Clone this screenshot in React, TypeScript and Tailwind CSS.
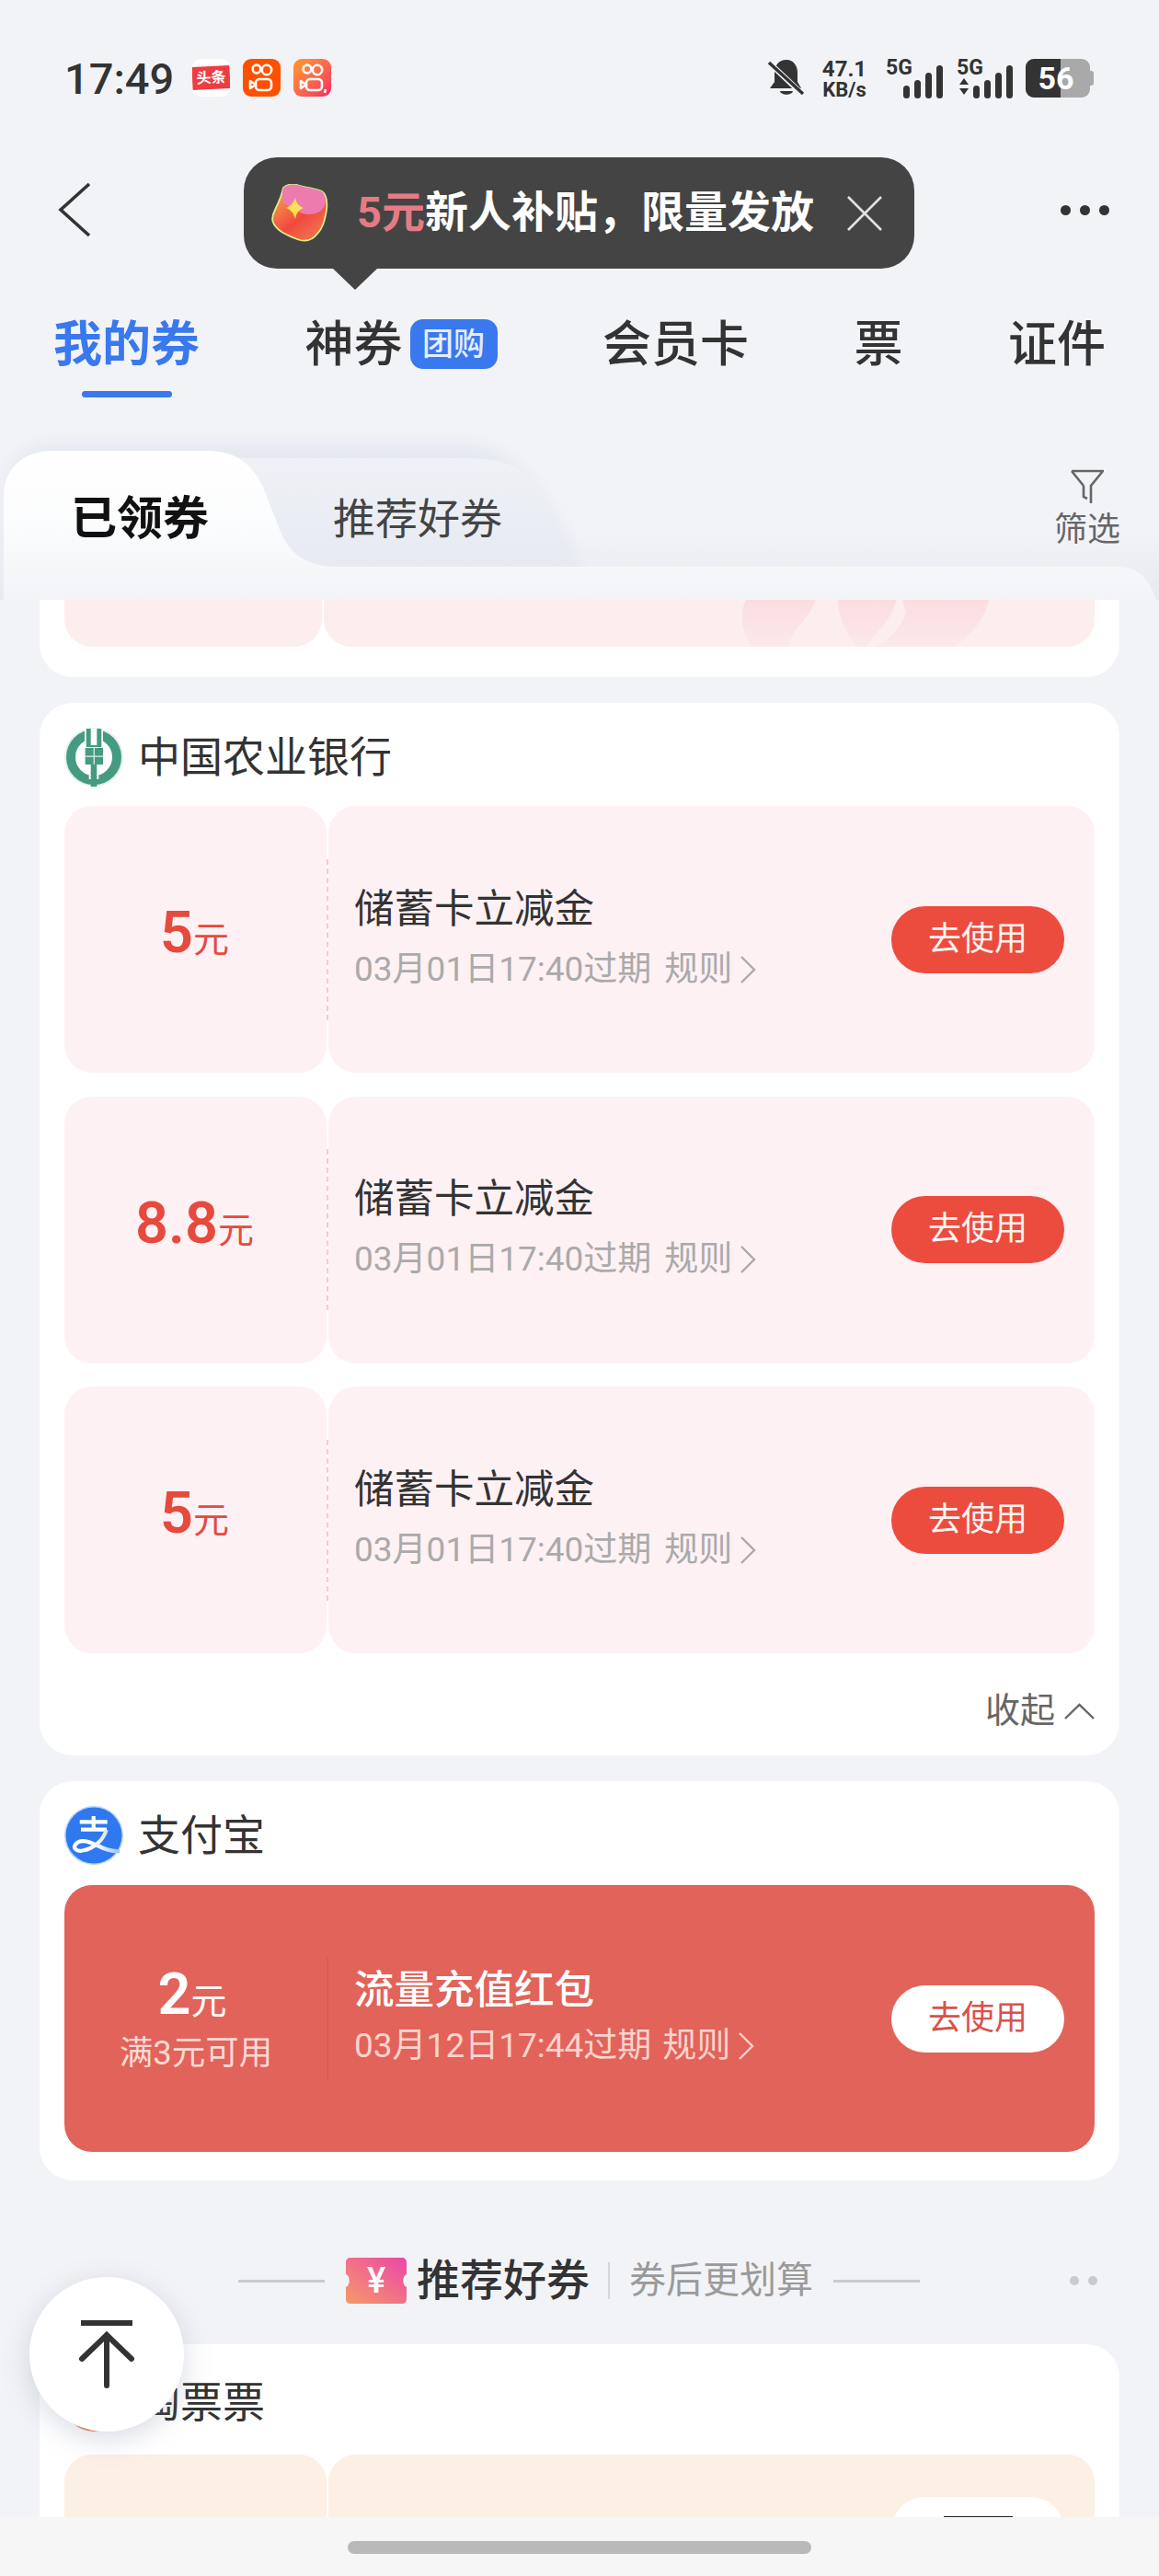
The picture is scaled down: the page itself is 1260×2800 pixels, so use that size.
import React from 'react'

type Coupon = { amount: string }

const bankCoupons: Coupon[] = [{ amount: '5' }, { amount: '8.8' }, { amount: '5' }]

function Signal({ arrows }: { arrows?: boolean }) {
  return (
    <svg width="64" height="44" viewBox="0 0 64 44" className="absolute left-0 top-0" fill="#333">
      {arrows && <path d="M2 22 L7 15 L12 22 Z M2 26 L12 26 L7 33 Z" />}
      <rect x="17" y="23" width="7" height="14" rx="3.5" />
      <rect x="29" y="17" width="7" height="20" rx="3.5" />
      <rect x="41" y="9" width="7" height="28" rx="3.5" />
      <rect x="53" y="1" width="7" height="36" rx="3.5" />
    </svg>
  )
}

function KuaishouGlyph({ comma }: { comma?: boolean }) {
  return (
    <svg width="34" height="34" viewBox="0 0 34 34" fill="none" stroke="#fff" strokeWidth="2.6">
      <circle cx="11" cy="7" r="4.4" />
      <circle cx="22" cy="8" r="5.2" />
      <rect x="10" y="18" width="17" height="12" rx="4" />
      <path d="M10 24 L4 20 V28 Z" strokeLinejoin="round" />
      {comma && <path d="M31 29 L30 33" strokeWidth="2.4" />}
    </svg>
  )
}

function StatusBar() {
  return (
    <div className="h-[172px] flex items-start pt-[64px] pl-[70px]">
      <div className="w-[139px] h-[44px] leading-[44px] text-[47px] font-medium text-[#333]">17:49</div>
      <div className="w-[41px] h-[41px] rounded-[9px] bg-white flex items-center justify-center overflow-hidden">
        <div className="w-[41px] h-[25px] bg-[#ee3d42] -rotate-3 text-white text-[16px] font-bold leading-[25px] text-center">头条</div>
      </div>
      <div className="ml-[14px] w-[41px] h-[41px] rounded-[9px] bg-[#ff5000] flex items-center justify-center">
        <KuaishouGlyph />
      </div>
      <div className="ml-[14px] w-[41px] h-[41px] rounded-[9px] bg-gradient-to-br from-[#ff9a1f] to-[#f5205f] flex items-center justify-center">
        <KuaishouGlyph comma />
      </div>

      {/* right side indicators */}
      <svg width="40" height="42" viewBox="0 0 40 42" className="ml-[475px] shrink-0" fill="#333">
        <path d="M20 1 C11 1 7 8 7 15 V25 L2 32 H36 L32 25 V15 C32 8 28 1 20 1 Z" />
        <path d="M13 35 H27 C26 40 14 40 13 35 Z" />
        <path d="M2 5 L37 38" stroke="#f2f3f7" strokeWidth="6" />
        <path d="M1 4 L38 38" stroke="#333" strokeWidth="3.4" />
      </svg>
      <div className="ml-[17px] w-[52px] flex flex-col items-center text-[#333] font-bold">
        <span className="text-[24px] leading-[22px]">47.1</span>
        <span className="text-[22px] leading-[20px] mt-[2px]">KB/s</span>
      </div>
      <div className="relative ml-[20px] w-[64px] h-[44px]">
        <span className="absolute -left-[1px] -top-[1px] text-[23px] leading-[22px] font-bold text-[#333]">5G</span>
        <div className="absolute left-[1px] top-[6px]"><Signal /></div>
      </div>
      <div className="relative ml-[13px] w-[64px] h-[44px]">
        <span className="absolute -left-[1px] -top-[1px] text-[23px] leading-[22px] font-bold text-[#333]">5G</span>
        <div className="absolute left-0 top-[6px]"><Signal arrows /></div>
      </div>
      <div className="ml-[10px] relative w-[70px] h-[42px] rounded-[9px] bg-[#a9a9a9] overflow-hidden">
        <div className="w-[38px] h-full bg-[#333]" />
        <span className="absolute inset-0 text-center text-white text-[34px] font-bold leading-[42px] pr-[4px]">56</span>
      </div>
      <div className="w-[4px] h-[16px] mt-[13px] rounded-r-[3px] bg-[#a9a9a9]" />
    </div>
  )
}

function NavBar() {
  return (
    <div className="h-[112px] flex items-center justify-between pl-[62px] pr-[54px]">
      <svg width="38" height="60" viewBox="0 0 38 60" fill="none" stroke="#333" strokeWidth="3.6">
        <path d="M35 2 L4 30 L35 58" />
      </svg>
      <div className="flex gap-[10px]">
        <span className="w-[11px] h-[11px] rounded-full bg-[#333]" />
        <span className="w-[11px] h-[11px] rounded-full bg-[#333]" />
        <span className="w-[11px] h-[11px] rounded-full bg-[#333]" />
      </div>
    </div>
  )
}

function TopTabs() {
  return (
    <div className="h-[186px] flex justify-between items-start pt-[64px] pl-[58px] pr-[58px] text-[53px] leading-[54px] text-[#333] font-medium">
      <div className="flex flex-col items-center">
        <span className="text-[#3a78ee] font-bold">我的券</span>
        <div className="w-[98px] h-[7px] mt-[23px] rounded-full bg-[#3a78ee]" />
      </div>
      <div className="flex items-center -mt-[2px]">
        <span className="pt-[2px]">神券</span>
        <span className="ml-[8px] w-[95px] h-[54px] rounded-[14px] bg-[#3a78ee] text-[#e3edff] text-[34px] leading-[54px] text-center font-medium">团购</span>
      </div>
      <span>会员卡</span>
      <span>票</span>
      <span>证件</span>
    </div>
  )
}

function SubTabs() {
  return (
    <div className="relative h-[182px] bg-gradient-to-b from-[#f2f3f7] from-60% to-[#e8eaef]">
      <svg width="1260" height="182" viewBox="0 0 1260 182" className="absolute left-0 top-0">
        <defs>
          <linearGradient id="backTab" x1="0" y1="0" x2="0" y2="1">
            <stop offset="0" stopColor="#eff1f6" />
            <stop offset="1" stopColor="#e5e8f1" />
          </linearGradient>
          <linearGradient id="activeTab" x1="0" y1="0" x2="0" y2="1">
            <stop offset="0" stopColor="#ffffff" />
            <stop offset="0.5" stopColor="#fbfcfd" />
            <stop offset="0.78" stopColor="#f5f7f9" />
            <stop offset="1" stopColor="#f2f4f8" />
          </linearGradient>
          <filter id="tabShade" x="-10%" y="-30%" width="120%" height="160%">
            <feGaussianBlur stdDeviation="10" />
          </filter>
        </defs>
        <path d="M4 100 C4 30 26 12 58 12 H510 C560 20 590 60 630 146 H4 Z" fill="#dfe3ee" opacity="0.7" filter="url(#tabShade)" />
        <path d="M230 182 V28 H510 C555 28 578 44 592 72 L612 118 C618 134 622 142 640 150 V182 Z" fill="url(#backTab)" />
        <path d="M0 182 H4 V70 C4 38 26 20 58 20 H225 C258 20 276 36 287 62 L305 108 C316 134 336 146 366 146 H1215 C1238 146 1250 160 1257 182 Z" fill="url(#activeTab)" />
      </svg>
      <div className="relative flex items-start pt-[40px] pl-[77px] pr-[41px]">
        <span className="mt-[26px] w-[150px] text-[50px] leading-[56px] font-bold text-[#111]">已领券</span>
        <span className="mt-[26px] ml-[135px] text-[46px] leading-[56px] text-[#444]">推荐好券</span>
        <div className="ml-auto w-[74px] flex flex-col items-center">
          <svg width="36" height="38" viewBox="0 0 36 38" fill="none" stroke="#666" strokeWidth="2.6">
            <path d="M1 2 H35 L22 18 V37 M14 18 L1 2 M14 18 V30 L18 32" />
          </svg>
          <span className="mt-[8px] text-[36px] leading-[40px] text-[#666]">筛选</span>
        </div>
      </div>
    </div>
  )
}

function BankLogo() {
  return (
    <svg width="64" height="64" viewBox="0 0 64 64">
      <circle cx="32" cy="32" r="32" fill="#e4f1ed" />
      <circle cx="32" cy="32" r="25" fill="#fff" stroke="#459b82" strokeWidth="10" />
      <rect x="22" y="1" width="20" height="21" fill="#fff" />
      <rect x="23.7" y="1" width="5" height="20" fill="#459b82" />
      <rect x="35.3" y="1" width="5" height="20" fill="#459b82" />
      <rect x="26" y="19" width="12" height="2" fill="#459b82" />
      <rect x="22.6" y="22" width="19.4" height="18" fill="#459b82" />
      <rect x="22.6" y="30.5" width="19.4" height="1.4" fill="#cfe6de" />
      <rect x="31.6" y="22" width="1.4" height="18" fill="#cfe6de" />
      <rect x="26.7" y="40" width="10.6" height="16" fill="#fff" />
      <rect x="28.7" y="40" width="6.6" height="24" fill="#459b82" />
    </svg>
  )
}

function AlipayLogo() {
  return (
    <svg width="64" height="64" viewBox="0 0 64 64" fill="none">
      <defs>
        <linearGradient id="swoosh" gradientUnits="userSpaceOnUse" x1="34" y1="0" x2="60" y2="0">
          <stop offset="0" stopColor="#ffffff" />
          <stop offset="1" stopColor="#9cc0f6" />
        </linearGradient>
      </defs>
      <circle cx="32" cy="32" r="32" fill="#bcd4fb" />
      <circle cx="32" cy="32" r="30.5" fill="#2f78f0" />
      <path d="M31.7 11 V26 M16.7 17.3 H46.7 M18 25.7 H46" stroke="#fff" strokeWidth="4.2" />
      <path d="M45.7 26 C42 38 32 46 20 48.5 C12 50 9.5 45 12 42 C16 36 26 38 36 43 C44 47 52 50 60 49" stroke="url(#swoosh)" strokeWidth="4.2" />
    </svg>
  )
}

function GiftIcon() {
  return (
    <svg width="62" height="64" viewBox="0 0 62 64" className="shrink-0">
      <defs>
        <linearGradient id="gift" x1="0.1" y1="0.1" x2="0.7" y2="0.9">
          <stop offset="0" stopColor="#f8a34f" />
          <stop offset="0.65" stopColor="#f0493f" />
          <stop offset="1" stopColor="#f26a4a" />
        </linearGradient>
      </defs>
      <path d="M13 4 C18 0 24 0 28 1 C38 4 48 5 55 8 C60 12 61 20 60 28 C58 40 56 48 50 54 C44 62 36 63 28 60 C18 56 8 52 3 44 C0 40 1 34 4 28 C7 22 11 14 13 4 Z" fill="url(#gift)" stroke="#dcef86" strokeWidth="1.8" />
      <path d="M13 4 C18 0 24 0 28 1 C38 4 48 5 55 8 C60 14 60 22 56 27 C50 33 42 34 34 32 C26 28 18 24 13 20 C11 14 12 8 13 4 Z" fill="#ec7cb0" />
      <path d="M26 15 C27 21 30 24 35 26 C30 28 27 31 26 38 C24 31 21 28 16 26 C21 24 24 21 26 15 Z" fill="#fbe14f" />
    </svg>
  )
}

function TicketLogo() {
  return (
    <svg width="66" height="50" viewBox="0 0 66 50">
      <defs>
        <linearGradient id="ticket" x1="0" y1="1" x2="1" y2="0">
          <stop offset="0" stopColor="#f59a68" />
          <stop offset="1" stopColor="#ec46a8" />
        </linearGradient>
      </defs>
      <path d="M5 0 H61 C64 0 66 2 66 5 V18 C61 20 61 30 66 32 V45 C66 48 64 50 61 50 H5 C2 50 0 48 0 45 V32 C5 30 5 20 0 18 V5 C0 2 2 0 5 0 Z" fill="url(#ticket)" />
      <text x="33" y="38" textAnchor="middle" fontSize="38" fontWeight="500" fill="#fff">¥</text>
    </svg>
  )
}

function ChevronRight({ color }: { color: string }) {
  return (
    <svg width="18" height="34" viewBox="0 0 18 34" fill="none" stroke={color} strokeWidth="2.4" className="ml-[8px]">
      <path d="M2 3 L16 17 L2 31" />
    </svg>
  )
}

function UseButton() {
  return (
    <div className="w-[188px] h-[73px] rounded-full bg-[#ec4c3e] text-[#fff3f1] text-[36px] leading-[73px] text-center">去使用</div>
  )
}

function BankCoupon({ amount }: Coupon) {
  return (
    <div className="flex h-[290px]">
      <div className="w-[285px] rounded-[30px] bg-[#fdf1f4] flex items-baseline justify-center pt-[100px] pr-[2px] text-[#e64a3c]">
        <span className="text-[63px] leading-[76px] font-semibold">{amount}</span>
        <span className="text-[39px]">元</span>
      </div>
      <div className="w-[2px] h-[175px] self-center border-l-2 border-dashed border-[#f7c9d0]" />
      <div className="flex-1 rounded-[30px] bg-[#fdf1f4] flex items-center pl-[28px] pr-[33px]">
        <div>
          <div className="text-[43.5px] leading-[60px] text-[#333]">储蓄卡立减金</div>
          <div className="mt-[5px] flex items-center text-[37px] leading-[60px] text-[#aaaaaa]">
            <span>03月01日17:40过期</span>
            <span className="ml-[14px]">规则</span>
            <ChevronRight color="#aaaaaa" />
          </div>
        </div>
        <div className="ml-auto"><UseButton /></div>
      </div>
    </div>
  )
}

function AlipayCoupon() {
  return (
    <div className="flex items-center h-[290px] rounded-[30px] bg-[#e2635a]">
      <div className="w-[286px] flex flex-col items-center text-white">
        <div className="flex items-baseline h-[68px] pr-[8px]">
          <span className="text-[63px] leading-[68px] font-semibold">2</span>
          <span className="text-[39px]">元</span>
        </div>
        <div className="mt-[8px] text-[36.5px] leading-[44px] text-[#fbd9d4]">满3元可用</div>
      </div>
      <div className="w-[1px] h-[134px] bg-[#d4564d]" />
      <div className="flex-1 flex items-center pl-[28px] pr-[33px]">
        <div>
          <div className="text-[43.5px] leading-[60px] font-medium text-white">流量充值红包</div>
          <div className="flex items-center text-[37px] leading-[60px] text-[#fbd3cd]">
            <span>03月12日17:44过期</span>
            <span className="ml-[12px]">规则</span>
            <ChevronRight color="#fbd3cd" />
          </div>
        </div>
        <div className="ml-auto w-[188px] h-[73px] rounded-full bg-white text-[#d9534a] text-[36px] leading-[73px] text-center">去使用</div>
      </div>
    </div>
  )
}

function CouponList() {
  return (
    <div className="flex-1 overflow-hidden px-[43px] bg-[#f2f3f7]">
      {/* first card, scrolled under the header */}
      <div className="h-[84px] rounded-b-[36px] bg-white px-[27px]">
        <div className="flex h-[51px] gap-[2px]">
          <div className="w-[280px] rounded-b-[30px] bg-[#fdeeee]" />
          <div className="relative flex-1 rounded-b-[30px] bg-[#fdeeee] overflow-hidden">
            <svg width="280" height="51" viewBox="0 0 280 51" className="absolute left-[451px] top-0">
              <defs>
                <linearGradient id="mark" x1="0" y1="0" x2="0" y2="1">
                  <stop offset="0" stopColor="#fbdde1" />
                  <stop offset="1" stopColor="#fce8ea" />
                </linearGradient>
              </defs>
              <path d="M8 0 H84 C78 14 72 22 64 30 C58 38 56 44 54 51 H14 C4 36 0 16 8 0 Z" fill="url(#mark)" />
              <path d="M108 0 H172 C168 12 162 24 152 34 L138 51 H128 C116 36 108 18 108 0 Z" fill="url(#mark)" />
              <path d="M178 0 H272 C268 20 252 40 234 51 H148 C164 44 176 30 182 14 Z" fill="url(#mark)" />
            </svg>
          </div>
        </div>
      </div>

      {/* bank card */}
      <div className="mt-[28px] rounded-[36px] bg-white px-[27px]">
        <div className="h-[112px] pt-[6px] flex items-center">
          <BankLogo />
          <span className="ml-[16px] text-[46px] leading-[64px] text-[#333]">中国农业银行</span>
        </div>
        <div className="flex flex-col gap-[25.5px]">
          {bankCoupons.map((c, i) => (
            <BankCoupon key={i} amount={c.amount} />
          ))}
        </div>
        <div className="h-[111px] pt-[14px] flex items-center justify-end text-[38px] text-[#666]">
          <span>收起</span>
          <svg width="33" height="20" viewBox="0 0 33 20" fill="none" stroke="#666" strokeWidth="2.4" className="ml-[10px]">
            <path d="M1 18 L16.5 3 L32 18" />
          </svg>
        </div>
      </div>

      {/* alipay */}
      <div className="mt-[28px] rounded-[36px] bg-white px-[27px] pb-[31px]">
        <div className="h-[113px] pt-[4px] flex items-center">
          <AlipayLogo />
          <span className="ml-[16px] text-[46px] leading-[64px] text-[#333]">支付宝</span>
        </div>
        <AlipayCoupon />
      </div>

      {/* recommended section title */}
      <div className="h-[178px] pt-[40px] pl-[216px] pr-[24px] flex items-center">
        <div className="w-[94px] h-[3px] bg-[#c9cad0]" />
        <div className="ml-[23px]"><TicketLogo /></div>
        <span className="ml-[11px] text-[47px] leading-[56px] text-[#333] font-medium">推荐好券</span>
        <div className="ml-[20px] w-[2px] h-[40px] bg-[#d5d6da]" />
        <span className="ml-[21px] text-[40px] leading-[56px] text-[#9a9a9a]">券后更划算</span>
        <div className="ml-[22px] w-[94px] h-[3px] bg-[#c9cad0]" />
        <div className="ml-auto flex gap-[10px]">
          <span className="w-[10px] h-[10px] rounded-full bg-[#c9cad0]" />
          <span className="w-[10px] h-[10px] rounded-full bg-[#c9cad0]" />
        </div>
      </div>

      {/* taopiaopiao, cut by the bottom bar */}
      <div className="rounded-t-[36px] bg-white px-[27px]">
        <div className="h-[120px] pt-[5px] flex items-center">
          <div className="w-[64px] h-[64px] rounded-full bg-[#f08a4b]" />
          <span className="ml-[16px] text-[46px] leading-[64px] text-[#333]">淘票票</span>
        </div>
        <div className="flex h-[290px] gap-[2px]">
          <div className="w-[285px] rounded-[30px] bg-[#fcefe4]" />
          <div className="flex-1 rounded-[30px] bg-[#fcefe4] flex justify-end pr-[33px] pt-[46px]">
            <div className="w-[188px] h-[73px] rounded-full bg-white flex justify-center pt-[21px]">
              <div className="w-[75px] h-[2px] bg-[#222]" />
            </div>
          </div>
        </div>
      </div>
    </div>
  )
}

export default function App() {
  return (
    <div className="relative w-[1260px] h-[2800px] overflow-hidden flex flex-col bg-[#f2f3f7] font-['Roboto','Noto_Sans_CJK_SC',sans-serif]">
      <StatusBar />
      <NavBar />
      <TopTabs />
      <SubTabs />
      <CouponList />

      {/* home indicator */}
      <div className="h-[64px] bg-[#f6f6f6] pt-[26px] flex justify-center">
        <div className="w-[504px] h-[14px] rounded-full bg-[#b9b9b9]" />
      </div>

      {/* promo tooltip */}
      <div className="absolute left-[265px] top-[171px] w-[729px] h-[121px] rounded-[36px] bg-[#444444] flex items-center pl-[30px] text-[47px] font-bold text-white">
        <GiftIcon />
        <span className="ml-[31px] text-[#e57b84]">5元</span>
        <span>新人补贴，限量发放</span>
        <svg width="40" height="40" viewBox="0 0 40 40" fill="none" stroke="#e2e2e2" strokeWidth="2.6" className="ml-[35px] shrink-0">
          <path d="M2 2 L38 38 M38 2 L2 38" />
        </svg>
      </div>
      <div className="absolute left-[362px] top-[292px] w-0 h-0 border-x-[24px] border-x-transparent border-t-[23px] border-t-[#444444]" />

      {/* scroll to top */}
      <div className="absolute left-[32px] top-[2475px] w-[168px] h-[168px] rounded-full bg-white shadow-[0_8px_30px_rgba(120,130,160,0.28)] flex items-center justify-center">
        <svg width="60" height="74" viewBox="0 0 60 74" fill="none" stroke="#333" strokeWidth="6" strokeLinecap="round">
          <path d="M2 3 H58" strokeLinecap="butt" />
          <path d="M30 71 V16 M3 42 L30 16 L57 42" />
        </svg>
      </div>
    </div>
  )
}
